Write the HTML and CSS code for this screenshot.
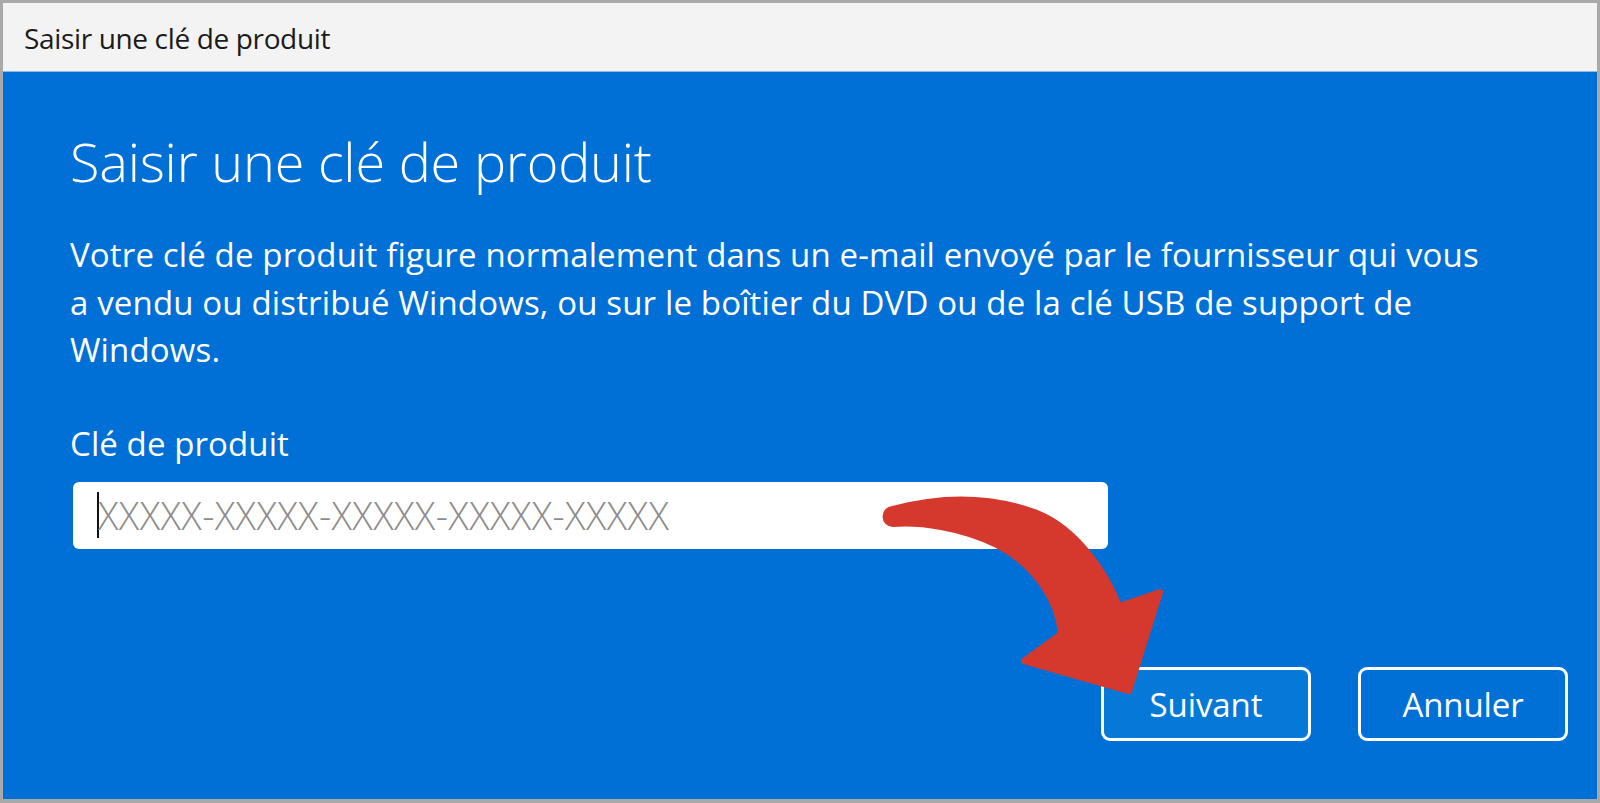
FILE: index.html
```html
<!DOCTYPE html>
<html lang="fr">
<head>
<meta charset="utf-8">
<title>Saisir une clé de produit</title>
<link rel="stylesheet" href="styles.css">
</head>
<body>
<div class="window">
  <div class="titlebar">Saisir une clé de produit</div>
  <div class="content">
    <h1 class="heading">Saisir une clé de produit</h1>
    <p class="desc">Votre clé de produit figure normalement dans un e-mail envoyé par le fournisseur qui vous<br>a vendu ou distribué Windows, ou sur le boîtier du DVD ou de la clé USB de support de<br>Windows.</p>
    <div class="label">Clé de produit</div>
    <div class="field">
      <span class="caret"></span>
      <span class="placeholder">XXXXX-XXXXX-XXXXX-XXXXX-XXXXX</span>
    </div>
    <div class="actions">
      <button class="btn btn-primary">Suivant</button>
      <button class="btn">Annuler</button>
    </div>
  </div>
</div>
<svg class="arrow" viewBox="870 480 310 230" width="310" height="230" aria-hidden="true">
  <path d="M893,509 C930,499 980,492 1037,513 C1075,528 1105,570 1119,606 L1160,592 L1129,691 L1024,661 L1061,634 C1058,600 1035,565 997,545 C960,527 920,522 893,524 A7.5,7.5 0 0 1 893,509 Z" fill="#d5392e" stroke="#d5392e" stroke-width="6" stroke-linejoin="round"/>
</svg>
</body>
</html>
```

FILE: styles.css
```css
html, body {
  margin: 0;
  padding: 0;
}
body {
  width: 1600px;
  height: 803px;
  background: #a9a9a9;
  position: relative;
  overflow: hidden;
  font-family: "Open Sans", "Noto Sans", sans-serif;
}
.window {
  margin: 3px 3px 0 3px;
  height: 796px;
  display: flex;
  flex-direction: column;
}
.titlebar {
  height: 69px;
  flex: none;
  background: #f3f3f3;
  border-bottom: 1px solid #8dbbe9;
  display: flex;
  align-items: center;
  padding-left: 21px;
  padding-top: 2px;
  box-sizing: border-box;
  font-size: 28px;
  letter-spacing: -0.35px;
  color: #1b1b1b;
}
.content {
  flex: 1;
  background: #006fd6;
  padding: 57px 29px 58px 67px;
  display: flex;
  flex-direction: column;
  color: #ffffff;
}
.heading {
  margin: 0;
  font-size: 54px;
  line-height: 64px;
  font-weight: 300;
  letter-spacing: -0.2px;
}
.desc {
  margin: 38px 0 0 0;
  font-size: 33px;
  line-height: 47.5px;
  letter-spacing: 0.15px;
}
.label {
  margin-top: 48px;
  font-size: 33px;
  line-height: 44px;
  letter-spacing: 0.1px;
}
.field {
  margin-top: 16px;
  margin-left: 3px;
  width: 1035px;
  height: 67px;
  box-sizing: border-box;
  background: #ffffff;
  border-radius: 6px;
  display: flex;
  align-items: center;
  padding-left: 24px;
}
.caret {
  width: 2px;
  height: 46px;
  background: #111111;
  flex: none;
}
.placeholder {
  margin-left: -1px;
  font-size: 38px;
  letter-spacing: 0.4px;
  color: #8c8c8c;
  font-weight: 300;
}
.actions {
  margin-top: auto;
  display: flex;
  justify-content: flex-end;
  gap: 47px;
}
.btn {
  width: 210px;
  height: 74px;
  box-sizing: border-box;
  border: 3px solid #ffffff;
  border-radius: 9px;
  background: #006fd6;
  color: #ffffff;
  font-family: "Open Sans", "Noto Sans", sans-serif;
  font-size: 33px;
  letter-spacing: -0.1px;
  padding: 0;
}
.btn-primary {
  background: #0679d8;
}
.arrow {
  position: absolute;
  left: 870px;
  top: 480px;
}
```
